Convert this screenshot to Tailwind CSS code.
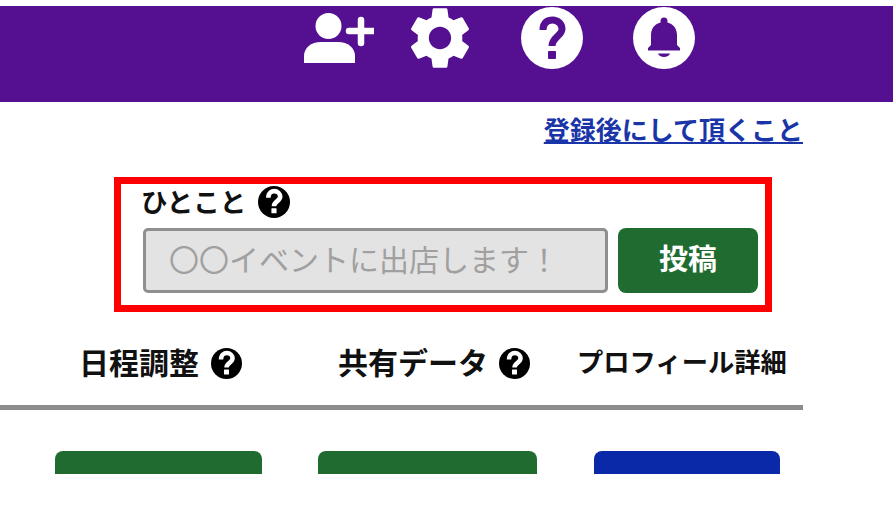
<!DOCTYPE html>
<html lang="ja">
<head>
  <meta charset="UTF-8" />
  <title>ひとこと</title>
  <meta name="viewport" content="width=device-width, initial-scale=1.0" />
  <script src="https://cdn.jsdelivr.net/npm/@tailwindcss/browser@4"></script>
</head>
<body class="bg-white h-[509px] overflow-hidden font-['Liberation_Sans','Noto_Sans_CJK_JP',sans-serif] text-[#111]">

  <!-- header -->
  <div class="mt-[6px] h-[96px] bg-[#541091] flex items-start pl-[304px] pt-[1px]">
    <svg class="mt-[5px] w-[70px] h-[52px]" viewBox="0 0 70 52" fill="#fff">
      <circle cx="24.5" cy="14" r="13" />
      <path d="M0 51V44C0 36 7 30 17 30H34C44 30 51 36 51 44V51Z" />
      <path d="M45 19H69M57 8V31" stroke="#fff" stroke-width="6.5" stroke-linecap="round" fill="none" />
    </svg>
    <svg class="ml-[35px] w-[62px] h-[62px]" viewBox="2 2 20 20" fill="#fff">
      <path d="M19.14 12.94c.04-.3.06-.61.06-.94 0-.32-.02-.64-.07-.94l2.03-1.58c.18-.14.23-.41.12-.61l-1.92-3.32c-.12-.22-.37-.29-.59-.22l-2.39.96c-.5-.38-1.03-.7-1.62-.94l-.36-2.54c-.04-.24-.24-.41-.48-.41h-3.84c-.24 0-.43.17-.47.41l-.36 2.54c-.59.24-1.13.57-1.62.94l-2.39-.96c-.22-.08-.47 0-.59.22L2.74 8.87c-.12.21-.08.47.12.61l2.03 1.58c-.05.3-.09.63-.09.94s.02.64.07.94l-2.03 1.58c-.18.14-.23.41-.12.61l1.92 3.32c.12.22.37.29.59.22l2.39-.96c.5.38 1.03.7 1.62.94l.36 2.54c.05.24.24.41.48.41h3.84c.24 0 .44-.17.47-.41l.36-2.54c.59-.24 1.13-.56 1.62-.94l2.39.96c.22.08.47 0 .59-.22l1.92-3.32c.12-.22.07-.47-.12-.61l-2.01-1.58zM12 15.6c-1.98 0-3.6-1.62-3.6-3.6s1.62-3.6 3.6-3.6 3.6 1.62 3.6 3.6-1.62 3.6-3.6 3.6z" />
    </svg>
    <svg class="ml-[50px] w-[62px] h-[62px]" viewBox="0 0 62 62">
      <circle cx="31" cy="31" r="31" fill="#fff" />
      <path d="M22 23C22 15 27 13 31.5 13C37 13 41 17 41 22C41 29 31 30 31 39" fill="none" stroke="#541091" stroke-width="7" />
      <rect x="27" y="44" width="8" height="8" rx="1" fill="#541091" />
    </svg>
    <svg class="ml-[50px] w-[62px] h-[62px]" viewBox="0 0 62 62" fill="#541091">
      <circle cx="31" cy="31" r="31" fill="#fff" />
      <circle cx="31" cy="14" r="3.5" />
      <path d="M18 38V28C18 20 24 15 31 15C38 15 44 20 44 28V38L47 41V43.5H15V41Z" />
      <path d="M25 46.5H37C36 51 26 51 25 46.5Z" />
    </svg>
  </div>

  <div class="w-[803px] flex justify-end mt-[16px] h-[26px]">
    <a href="#" class="text-[26px] leading-[27px] font-bold text-[#1a35a8] underline underline-offset-2">登録後にして頂くこと</a>
  </div>

  <!-- post box -->
  <div class="ml-[114px] mt-[33px] w-[658px] h-[135px] border-[7px] border-[#ff0000] pl-[22px] pr-[7px] pt-[1px]">
    <div class="flex items-center h-[36px]">
      <span class="-ml-[2px] text-[26.5px] font-bold leading-none">ひとこと</span>
      <svg class="ml-[12px] mb-[2px] w-[32px] h-[32px]" viewBox="0 0 62 62">
        <circle cx="31" cy="31" r="31" fill="#000" />
        <path d="M20 23C20 13 27 10 31.5 10C38 10 43 15 43 21C43 29 31 30 31 39" fill="none" stroke="#fff" stroke-width="9" />
        <rect x="26" y="43" width="10" height="10" rx="1" fill="#fff" />
      </svg>
    </div>
    <div class="flex mt-[7px] gap-[10px]">
      <input type="text" placeholder="〇〇イベントに出店します！" class="w-[465px] h-[65px] border-[3px] border-[#8f8f8f] rounded-[5px] bg-[#e3e3e3] pl-[23px] text-[30px] placeholder:text-[#a0a0a0]" />
      <button class="w-[140px] h-[65px] rounded-[8px] bg-[#1f6b30] text-white text-[29px] font-bold">投稿</button>
    </div>
  </div>

  <!-- tabs -->
  <div class="w-[803px] h-[98px] border-b-[5px] border-[#8c8c8c] flex items-start pt-[33px] font-bold">
    <div class="ml-[79px] flex items-center h-[38px]">
      <span class="text-[30px] leading-none">日程調整</span>
      <svg class="ml-[12px] mb-[2px] w-[31px] h-[31px]" viewBox="0 0 62 62">
        <circle cx="31" cy="31" r="31" fill="#000" />
        <path d="M20 23C20 13 27 10 31.5 10C38 10 43 15 43 21C43 29 31 30 31 39" fill="none" stroke="#fff" stroke-width="9" />
        <rect x="26" y="43" width="10" height="10" rx="1" fill="#fff" />
      </svg>
    </div>
    <div class="ml-[96px] flex items-center h-[38px]">
      <span class="text-[30px] leading-none">共有データ</span>
      <svg class="ml-[11px] mb-[2px] w-[31px] h-[31px]" viewBox="0 0 62 62">
        <circle cx="31" cy="31" r="31" fill="#000" />
        <path d="M20 23C20 13 27 10 31.5 10C38 10 43 15 43 21C43 29 31 30 31 39" fill="none" stroke="#fff" stroke-width="9" />
        <rect x="26" y="43" width="10" height="10" rx="1" fill="#fff" />
      </svg>
    </div>
    <div class="ml-[47px] flex items-center h-[36px] text-[26.3px] leading-none">プロフィール詳細</div>
  </div>

  <!-- buttons, cut off by the capture -->
  <div class="mt-[41px] h-[23px] overflow-hidden flex items-start">
    <div class="ml-[55px] w-[207px] h-[65px] rounded-[8px] bg-[#1f6b30]"></div>
    <div class="ml-[56px] w-[219px] h-[65px] rounded-[8px] bg-[#1f6b30]"></div>
    <div class="ml-[57px] w-[186px] h-[65px] rounded-[8px] bg-[#0a29a8]"></div>
  </div>

</body>
</html>
